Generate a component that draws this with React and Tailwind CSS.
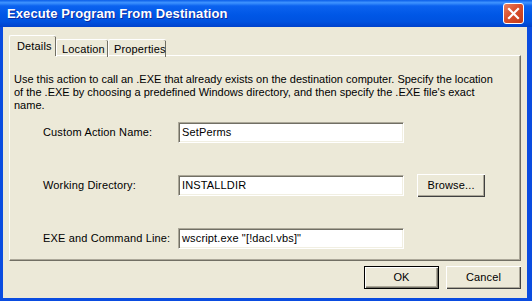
const Field = ({ value }) => (
  <div className="w-[226px] h-[21px] bg-white border border-t-[#ACA899] border-l-[#ACA899] border-r-white border-b-white shadow-[inset_1px_1px_0_#716F64,inset_-1px_-1px_0_#F1EFE2] flex items-center pl-[3px] text-black whitespace-nowrap overflow-hidden">
    {value}
  </div>
);

const Button = ({ children, width = "w-[75px]", isDefault = false }) => (
  <button
    className={
      isDefault
        ? `${width} h-[23px] border border-black bg-[#ECE9D8] flex items-center justify-center text-black shadow-[inset_1px_1px_0_#fff,inset_-1px_-1px_0_#716F64,inset_-2px_-2px_0_#ACA899]`
        : `${width} h-[23px] bg-[#ECE9D8] flex items-center justify-center text-black shadow-[inset_1px_1px_0_#fff,inset_-1px_-1px_0_#404040,inset_-2px_-2px_0_#ACA899]`
    }
  >
    {children}
  </button>
);

const Row = ({ label, value, browse }) => (
  <div className="h-[23px] flex items-center">
    <div className="w-[164px] shrink-0 pl-[29px] text-black whitespace-nowrap">{label}</div>
    <Field value={value} />
    {browse && (
      <div className="ml-[13px]">
        <Button width="w-[68px]">Browse...</Button>
      </div>
    )}
  </div>
);

export default function App() {
  return (
    <div className="w-[532px] h-[301px] bg-[#0A4CE0] flex flex-col font-['Liberation_Sans',Arial,sans-serif] text-[11px] leading-[13px] tracking-[0.15px] overflow-hidden">
      {/* title bar */}
      <div className="h-[27px] shrink-0 flex items-center pl-[7px] pr-[8px] bg-[linear-gradient(to_bottom,#0A5DE8_0%,#3F94FF_10%,#0B62EF_22%,#0057E6_55%,#0052E0_80%,#0042CC_100%)]">
        <span className="text-white font-bold text-[13px] [text-shadow:1px_1px_0_#0F2A9C] tracking-[0.1px]">
          Execute Program From Destination
        </span>
        <div className="ml-auto w-[21px] h-[21px] rounded-[3px] border border-white bg-[linear-gradient(135deg,#EA8060_0%,#D9502D_45%,#C23A19_100%)] flex items-center justify-center">
          <svg width="13" height="13" viewBox="0 0 13 13">
            <path d="M2 2 L11 11 M11 2 L2 11" stroke="#fff" strokeWidth="2.2" strokeLinecap="square" />
          </svg>
        </div>
      </div>

      {/* client area */}
      <div className="flex-1 ml-[3px] mr-[5px] mb-[3px] bg-[#ECE9D8] flex flex-col px-[6px]">
        {/* tabs */}
        <div className="mt-[8px] h-[21px] flex items-end relative z-10">
          <div className="w-[47px] h-[21px] bg-[#ECE9D8] border-l border-t border-white shadow-[inset_-1px_0_0_#716F64] rounded-t-[2px] pl-[7px] pt-[4px] text-black">
            Details
          </div>
          <div className="w-[52px] h-[18px] -mb-px border-l border-t border-white shadow-[inset_-1px_0_0_#716F64] rounded-t-[2px] pl-[5px] pt-[3px] text-black">
            Location
          </div>
          <div className="w-[58px] h-[18px] -mb-px border-l border-t border-white shadow-[inset_-1px_0_0_#716F64] rounded-t-[2px] pl-[5px] pt-[3px] text-black">
            Properties
          </div>
        </div>

        {/* tab panel */}
        <div className="h-[206px] -mt-px border border-t-white border-l-white border-r-[#716F64] border-b-[#716F64] shadow-[inset_-1px_-1px_0_#ACA899] flex flex-col px-[4px] pt-[17px]">
          <p className="text-black tracking-normal whitespace-nowrap">
            Use this action to call an .EXE that already exists on the destination computer. Specify the location
            <br />
            of the .EXE by choosing a predefined Windows directory, and then specify the .EXE file's exact
            <br />
            name.
          </p>
          <div className="mt-[9px] flex flex-col gap-[30px]">
            <Row label="Custom Action Name:" value="SetPerms" />
            <Row label="Working Directory:" value="INSTALLDIR" browse />
            <Row label="EXE and Command Line:" value={'wscript.exe "[!dacl.vbs]"'} />
          </div>
        </div>

        {/* buttons */}
        <div className="mt-[5px] flex justify-end gap-[7px]">
          <Button isDefault>OK</Button>
          <Button>Cancel</Button>
        </div>
      </div>
    </div>
  );
}
